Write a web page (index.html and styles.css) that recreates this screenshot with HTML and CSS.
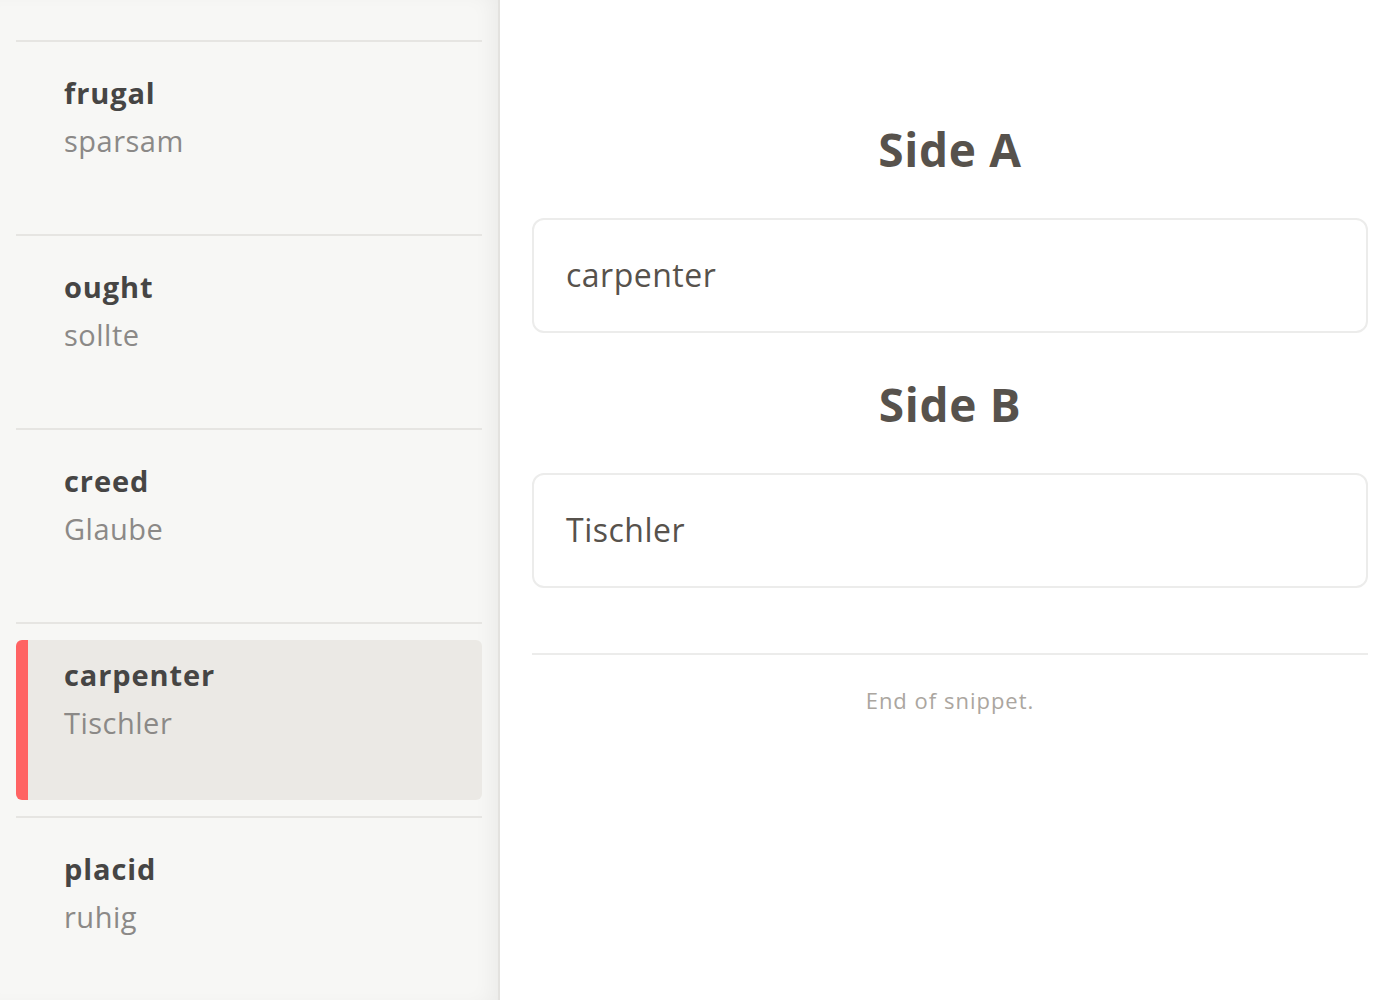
FILE: index.html
```html
<!DOCTYPE html>
<html lang="en">
<head>
<meta charset="utf-8">
<title>Flashcards</title>
<link rel="stylesheet" href="styles.css">
</head>
<body>
<div class="app">
  <aside class="sidebar">
    <div class="divider"></div>
    <div class="card-item">
      <div class="card-title">frugal</div>
      <div class="card-sub">sparsam</div>
    </div>
    <div class="divider"></div>
    <div class="card-item">
      <div class="card-title">ought</div>
      <div class="card-sub">sollte</div>
    </div>
    <div class="divider"></div>
    <div class="card-item">
      <div class="card-title">creed</div>
      <div class="card-sub">Glaube</div>
    </div>
    <div class="divider"></div>
    <div class="card-item selected">
      <div class="card-title">carpenter</div>
      <div class="card-sub">Tischler</div>
    </div>
    <div class="divider"></div>
    <div class="card-item">
      <div class="card-title">placid</div>
      <div class="card-sub">ruhig</div>
    </div>
  </aside>
  <main class="main">
    <h2 class="side-heading">Side A</h2>
    <div class="side-box">carpenter</div>
    <h2 class="side-heading">Side B</h2>
    <div class="side-box">Tischler</div>
    <div class="rule"></div>
    <p class="end-note">End of snippet.</p>
  </main>
</div>
</body>
</html>
```

FILE: styles.css
```css
html, body {
  margin: 0;
  padding: 0;
  height: 100%;
  overflow: hidden;
  background: #ffffff;
  font-family: "Open Sans", "Noto Sans", sans-serif;
}

.app {
  display: flex;
  height: 100vh;
}

.sidebar {
  width: 500px;
  flex: 0 0 500px;
  box-sizing: border-box;
  background: #f7f7f5;
  border-right: 2px solid #e3e2df;
  box-shadow: inset -14px 0 22px -10px rgba(0, 0, 0, 0.06);
  padding: 40px 16px 0 16px;
  overflow: hidden;
}

.divider {
  height: 2px;
  background: #e6e5e2;
}

.card-item {
  height: 160px;
  box-sizing: border-box;
  margin: 16px 0;
  padding: 11px 0 0 48px;
  border-radius: 6px;
}

.card-item.selected {
  background: #ebe9e5;
  border-left: 12px solid #ff6363;
  padding-left: 36px;
}

.card-title {
  font-size: 29px;
  line-height: 48px;
  font-weight: 700;
  color: #464544;
  letter-spacing: 0.9px;
}

.card-sub {
  font-size: 29px;
  line-height: 48px;
  font-weight: 400;
  color: #8b8987;
  letter-spacing: 0.5px;
}

.main {
  flex: 1;
  padding: 121px 32px 0 32px;
  box-sizing: border-box;
}

.side-heading {
  margin: 0 0 41px 0;
  font-size: 46px;
  line-height: 56px;
  font-weight: 700;
  text-align: center;
  color: #57524c;
  letter-spacing: 0.7px;
}

.side-box {
  height: 115px;
  box-sizing: border-box;
  border: 2px solid #ececeb;
  border-radius: 12px;
  padding: 35px 32px 0 32px;
  font-size: 32px;
  line-height: 40px;
  color: #57524c;
  letter-spacing: 0.5px;
  margin-bottom: 43px;
}

.rule {
  height: 2px;
  background: #ececeb;
  margin-top: 65px;
}

.end-note {
  margin: 29px 0 0 0;
  text-align: center;
  font-size: 22px;
  line-height: 33px;
  color: #aba6a0;
  letter-spacing: 1px;
}
```
